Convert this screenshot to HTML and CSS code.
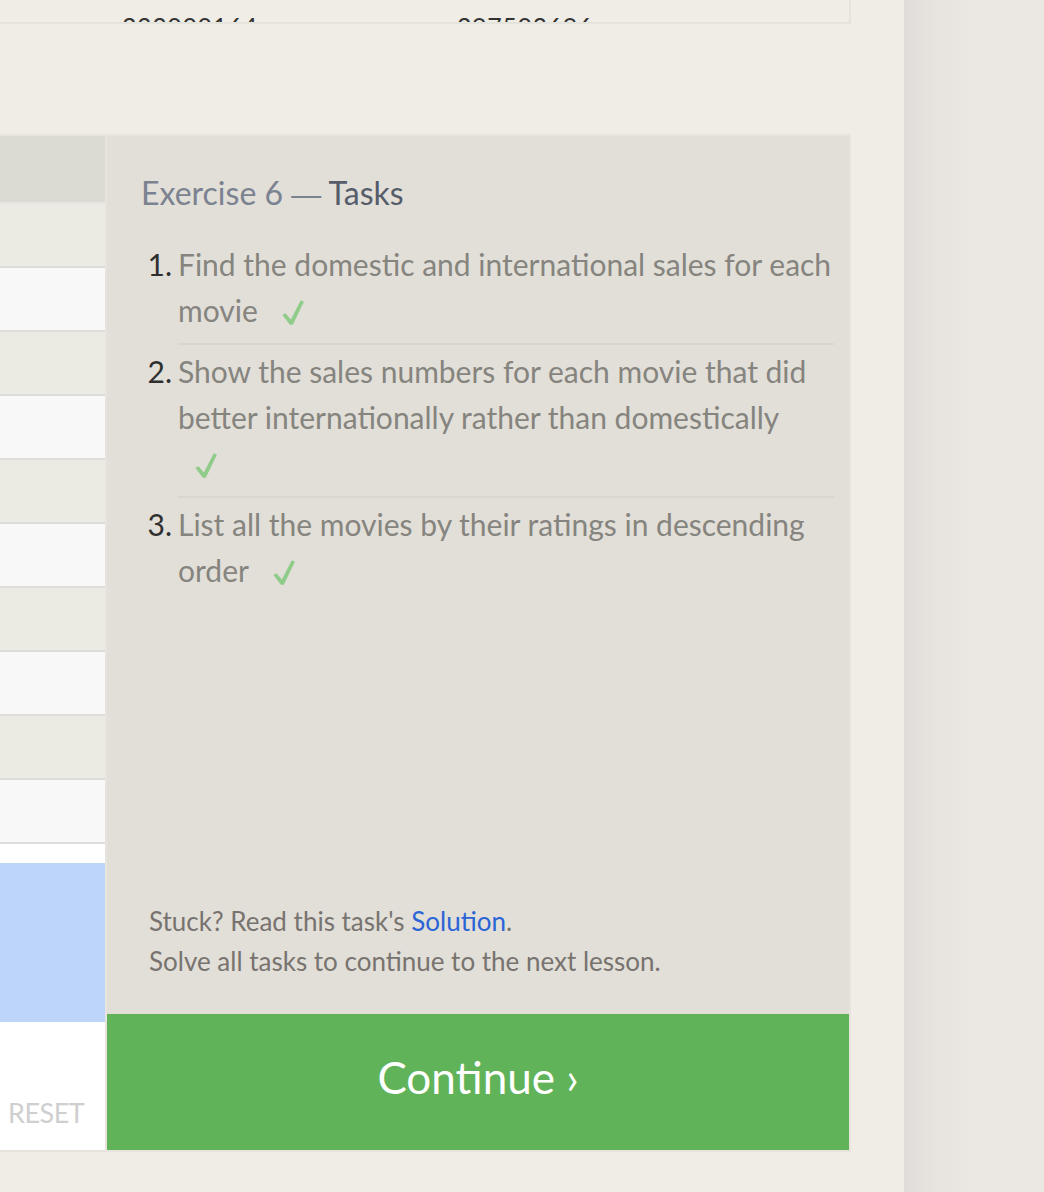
FILE: index.html
```html
<!DOCTYPE html>
<html lang="en">
<head>
<meta charset="utf-8">
<title>Exercise 6 — Tasks</title>
<link rel="stylesheet" href="styles.css">
</head>
<body>
<div class="page">
  <div class="main">
    <div class="prev">
      <div class="prev-row">
        <span class="prev-cell">233000164</span>
        <span class="prev-cell">297503696</span>
      </div>
    </div>

    <div class="lesson">
      <div class="results">
        <div class="rhead"></div>
        <div class="rrow odd"></div>
        <div class="rrow even"></div>
        <div class="rrow odd"></div>
        <div class="rrow even"></div>
        <div class="rrow odd"></div>
        <div class="rrow even"></div>
        <div class="rrow odd"></div>
        <div class="rrow even"></div>
        <div class="rrow odd"></div>
        <div class="rrow even"></div>
        <div class="editor">
          <div class="editor-gap"></div>
          <div class="editor-sel"></div>
          <div class="editor-foot"><span class="reset">RESET</span></div>
        </div>
      </div>

      <div class="panel">
        <div class="panel-body">
          <h2 class="title"><span class="title-ex">Exercise 6 <span class="dash">—</span> </span><span class="title-tasks">Tasks</span></h2>
          <ol class="tasks">
            <li class="task">
              <span class="num">1.</span>
              <div class="task-text">Find the domestic and international sales for each movie <svg class="check" viewBox="0 0 22 25" aria-label="done"><path d="M0.4 15 L3.4 13.2 L8.9 19.4 L18.8 0.3 L21.9 1.7 L10.8 24.8 L7.9 24.8 Z"/></svg></div>
            </li>
            <li class="task">
              <span class="num">2.</span>
              <div class="task-text">Show the sales numbers for each movie that did better internationally rather than domestically <svg class="check" viewBox="0 0 22 25" aria-label="done"><path d="M0.4 15 L3.4 13.2 L8.9 19.4 L18.8 0.3 L21.9 1.7 L10.8 24.8 L7.9 24.8 Z"/></svg></div>
            </li>
            <li class="task">
              <span class="num">3.</span>
              <div class="task-text last">List all the movies by their ratings in descending order <svg class="check" viewBox="0 0 22 25" aria-label="done"><path d="M0.4 15 L3.4 13.2 L8.9 19.4 L18.8 0.3 L21.9 1.7 L10.8 24.8 L7.9 24.8 Z"/></svg></div>
            </li>
          </ol>
          <div class="foot">
            <p>Stuck? Read this task's <a class="link" href="#">Solution</a>.</p>
            <p>Solve all tasks to continue to the next lesson.</p>
          </div>
        </div>
        <button class="continue" type="button">Continue ›</button>
      </div>
    </div>
  </div>
  <div class="side"></div>
</div>
</body>
</html>
```

FILE: styles.css
```css
* { box-sizing: border-box; }

html, body {
  margin: 0;
  padding: 0;
  height: 100%;
}

body {
  background: #f0ede6;
  font-family: Lato, "Open Sans", sans-serif;
}

.page {
  display: flex;
  min-height: 1192px;
}

.main {
  width: 904px;
  flex: none;
}

.side {
  flex: 1;
  background: linear-gradient(to right, #e0dcd9 0px, #e7e4e0 30px, #ebe7e3 70px, #ebe7e3 100%);
}

/* previous results box (clipped) */
.prev {
  width: 851px;
  height: 24px;
  border-right: 2px solid #e4e3dc;
  border-bottom: 2px solid #e4e3dc;
  overflow: hidden;
}

.prev-row {
  display: flex;
  padding-top: 13px;
  padding-left: 122px;
}

.prev-cell {
  width: 335px;
  font-size: 25px;
  line-height: 26px;
  color: #333;
  letter-spacing: 0.6px;
}

/* lesson frame */
.lesson {
  margin-top: 110px;
  width: 851px;
  height: 1018px;
  display: flex;
  border-top: 2px solid #e6e4dd;
  border-bottom: 2px solid #e6e4dd;
  border-right: 2px solid #e6e4dd;
  background: #e6e4dd;
}

.results {
  width: 105px;
  flex: none;
  display: flex;
  flex-direction: column;
}

.rhead {
  height: 68px;
  background: #dcdbd3;
  border-bottom: 2px solid #e6e5df;
}

.rrow {
  height: 64px;
  border-bottom: 2px solid #dedcd8;
}

.rrow.odd { background: #ebeae3; }
.rrow.even { background: #f8f8f8; }

.editor {
  flex: 1;
  display: flex;
  flex-direction: column;
  background: #ffffff;
}

.editor-gap { height: 19px; }

.editor-sel {
  height: 159px;
  background: #bcd5f9;
}

.editor-foot {
  flex: 1;
  display: flex;
  align-items: flex-end;
  padding: 0 0 22px 8px;
}

.reset {
  font-size: 27px;
  line-height: 30px;
  color: #cfcfcf;
  letter-spacing: -0.5px;
}

/* task panel */
.panel {
  margin-left: 2px;
  flex: 1;
  display: flex;
  flex-direction: column;
  background: #e1dfd8;
}

.panel-body {
  flex: 1;
  display: flex;
  flex-direction: column;
  padding: 37px 15px 33px 34px;
}

.title {
  margin: 0;
  height: 40px;
  font-size: 32px;
  line-height: 40px;
  font-weight: 400;
}

.title-ex { color: #7b8290; }
.title-tasks { color: #555c6a; }

.dash {
  font-family: "Liberation Sans", sans-serif;
  font-size: 30px;
  line-height: 0;
}

.tasks {
  list-style: none;
  margin: 28px 0 0 0;
  padding: 0;
}

.task {
  display: flex;
}

.num {
  width: 37px;
  flex: none;
  padding-right: 6px;
  padding-top: 3px;
  text-align: right;
  font-size: 30px;
  line-height: 46px;
  color: #2f2f2f;
}

.task-text {
  flex: 1;
  padding: 3px 0 10px 0;
  border-bottom: 2px solid #d9d6ce;
  font-size: 30px;
  line-height: 46px;
  color: #86847e;
}

.task:first-child .num,
.task:first-child .task-text { padding-top: 0; }

.task-text.last { border-bottom: none; }

.check {
  display: inline-block;
  width: 22px;
  height: 25px;
  margin-left: 17px;
  margin-right: 20px;
  vertical-align: -3px;
  fill: #8fcb89;
}

.foot {
  margin-top: auto;
  padding-left: 8px;
}

.foot p {
  margin: 0;
  font-size: 26px;
  line-height: 40px;
  color: #78736f;
}

.link {
  color: #2b64d6;
  text-decoration: none;
}

.continue {
  flex: none;
  height: 136px;
  width: 100%;
  border: none;
  margin: 0;
  padding: 0 0 10px 0;
  background: #61b35a;
  color: #ffffff;
  font-family: Lato, "Open Sans", sans-serif;
  font-size: 44px;
  cursor: pointer;
}
```
